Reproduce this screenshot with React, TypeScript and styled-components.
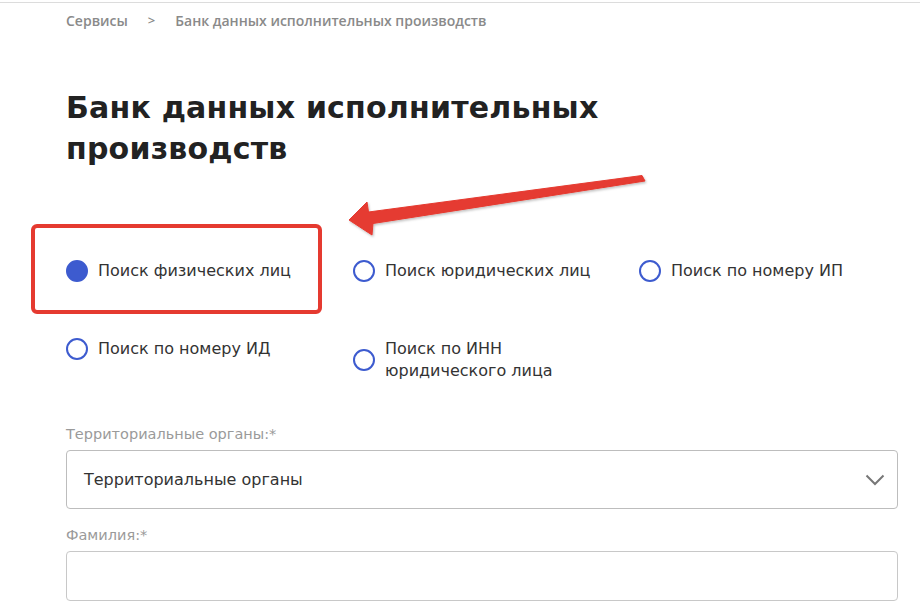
import React from "react";
import styled, { createGlobalStyle } from "styled-components";

const GlobalStyle = createGlobalStyle`
  html, body {
    margin: 0;
    padding: 0;
    background: #fff;
  }
  body {
    font-family: "DejaVu Sans", "Noto Sans", sans-serif;
    color: #2b2b2b;
  }
`;

const options = [
  { label: "Поиск физических лиц", checked: true },
  { label: "Поиск юридических лиц" },
  { label: "Поиск по номеру ИП" },
  { label: "Поиск по номеру ИД" },
  { label: "Поиск по ИНН\nюридического лица" },
];

const App: React.FC = () => {
  return (
    <>
      <GlobalStyle />
      <Page>
        <TopLine />
        <Content>
          <Breadcrumbs>
            <Crumb>Сервисы</Crumb>
            <Separator>&gt;</Separator>
            <Crumb>Банк данных исполнительных производств</Crumb>
          </Breadcrumbs>

          <Title>
            Банк данных исполнительных
            <br />
            производств
          </Title>

          <RadioArea>
            <Highlight />
            <Arrow width="320" height="80" viewBox="0 0 320 80">
              <defs>
                <filter id="sh" x="-10%" y="-50%" width="120%" height="200%">
                  <feDropShadow dx="1" dy="1.5" stdDeviation="1" floodColor="#000" floodOpacity="0.25" />
                </filter>
              </defs>
              <path
                d="M9 49 L27 31 L28.5 41 L302 4.5 L305 10 L33 52.5 L32 64 Z"
                fill="#e53a30"
                strokeLinejoin="round"
                stroke="#e53a30"
                strokeWidth="1"
                filter="url(#sh)"
              />
            </Arrow>
            {options.map((o) => (
              <RadioItem key={o.label}>
                <RadioCircle $checked={!!o.checked} />
                <RadioLabel>{o.label}</RadioLabel>
              </RadioItem>
            ))}
          </RadioArea>

          <Field>
            <FieldLabel>Территориальные органы:*</FieldLabel>
            <SelectBox>
              <span>Территориальные органы</span>
              <svg width="20" height="12" viewBox="0 0 20 12">
                <path d="M1.5 1.5 L10 10 L18.5 1.5" fill="none" stroke="#777" strokeWidth="2" />
              </svg>
            </SelectBox>
          </Field>

          <Field>
            <FieldLabel>Фамилия:*</FieldLabel>
            <InputBox />
          </Field>
        </Content>
      </Page>
    </>
  );
};
export default App;

const Page = styled.div`
  width: 920px;
  height: 604px;
  overflow: hidden;
  padding-top: 2px;
  box-sizing: border-box;
`;

const TopLine = styled.div`
  height: 1px;
  background: #dcdcdc;
`;

const Content = styled.div`
  padding: 0 22px 0 66px;
`;

const Breadcrumbs = styled.div`
  display: flex;
  align-items: center;
  height: 34px;
  font-family: "Open Sans", sans-serif;
  font-weight: 600;
  font-size: 14px;
  color: #8a8a8a;
`;

const Crumb = styled.span``;

const Separator = styled.span`
  margin: 0 20px 0 20px;
  font-size: 13px;
`;

const Title = styled.h1`
  margin: 50px 0 0;
  font-family: "DejaVu Sans", sans-serif;
  font-weight: 700;
  font-size: 30px;
  line-height: 41px;
  color: #222;
  letter-spacing: 0.2px;
`;

const RadioArea = styled.div`
  position: relative;
  display: grid;
  grid-template-columns: 287px 286px auto;
  align-items: start;
  row-gap: 56px;
  margin-top: 91px;
`;

const Highlight = styled.div`
  position: absolute;
  left: -35px;
  top: -36px;
  width: 283px;
  height: 82px;
  border: 4px solid #e53a30;
  border-radius: 6px;
  pointer-events: none;
`;

const Arrow = styled.svg`
  position: absolute;
  left: 274px;
  top: -89px;
  overflow: visible;
`;

const RadioItem = styled.div`
  display: flex;
  align-items: center;
  gap: 10px;
`;

const RadioCircle = styled.span<{ $checked: boolean }>`
  flex: none;
  width: 22px;
  height: 22px;
  border-radius: 50%;
  box-sizing: border-box;
  border: 2px solid #3d5bcf;
  background: ${(p) => (p.$checked ? "#3d5bcf" : "#fff")};
`;

const RadioLabel = styled.span`
  white-space: pre-line;
  font-size: 16px;
  line-height: 22px;
  color: #333;
`;

const Field = styled.div`
  margin-top: 43px;

  & + & {
    margin-top: 17px;
  }
`;

const FieldLabel = styled.div`
  font-family: "DejaVu Sans", sans-serif;
  font-size: 14.5px;
  line-height: 18px;
  color: #9a9a9a;
  margin-bottom: 7px;
`;

const SelectBox = styled.div`
  display: flex;
  align-items: center;
  justify-content: space-between;
  height: 59px;
  box-sizing: border-box;
  padding: 0 12px 0 17px;
  border: 1px solid #bdbdbd;
  border-radius: 4px;
  font-family: "DejaVu Sans", sans-serif;
  font-size: 16px;
  color: #333;
`;

const InputBox = styled.div`
  height: 50px;
  box-sizing: border-box;
  border: 1px solid #c8c8c8;
  border-radius: 4px;
`;
